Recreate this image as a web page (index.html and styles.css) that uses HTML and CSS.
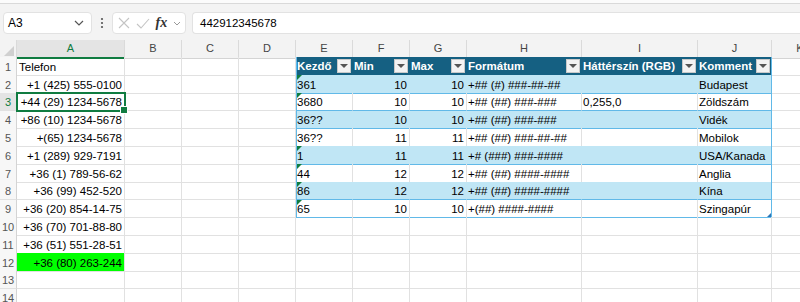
FILE: index.html
```html
<!doctype html>
<html>
<head>
<meta charset="utf-8" />
<meta name="viewport" content="width=device-width" />
<title>Telefonszámok</title>
<link rel="stylesheet" href="styles.css">
</head>
<body>

<div class="ribbon-edge"></div>

<div class="fbar">
  <div class="namebox">
    <span>A3</span>
    <svg width="10" height="6" viewBox="0 0 10 6"><path d="M1 1l4 4 4-4" fill="none" stroke="#555" stroke-width="1.2"/></svg>
  </div>
  <div class="dots">
    <svg width="4" height="12" viewBox="0 0 4 12"><circle cx="2" cy="2" r="1.1" fill="#555"/><circle cx="2" cy="6" r="1.1" fill="#555"/><circle cx="2" cy="10" r="1.1" fill="#555"/></svg>
  </div>
  <div class="fbtns">
    <svg width="12" height="12" viewBox="0 0 12 12"><path d="M1 1l10 10M11 1L1 11" stroke="#c4c4c4" stroke-width="1.1"/></svg>
    <svg width="14" height="11" viewBox="0 0 14 11"><path d="M1 6l4 4 8-9" fill="none" stroke="#c4c4c4" stroke-width="1.1"/></svg>
    <span class="fx">fx</span>
    <svg width="8" height="5" viewBox="0 0 8 5"><path d="M1 1l3 3 3-3" fill="none" stroke="#999" stroke-width="1"/></svg>
  </div>
  <div class="finput">442912345678</div>
</div>

<div class="sheet">
  <div class="row colhdr">
    <div class="corner"></div>
    <div class="on">A</div><div>B</div><div>C</div><div>D</div><div>E</div><div>F</div>
    <div>G</div><div>H</div><div>I</div><div>J</div><div>K</div>
  </div>

  <div class="row">
    <div class="rh">1</div>
    <div>Telefon</div><div></div><div></div><div></div>
    <div class="h first">Kezdő<i class="fb"></i></div>
    <div class="h">Min<i class="fb"></i></div>
    <div class="h">Max<i class="fb"></i></div>
    <div class="h">Formátum<i class="fb"></i></div>
    <div class="h">Háttérszín (RGB)<i class="fb"></i></div>
    <div class="h last">Komment<i class="fb"></i></div>
    <div></div>
  </div>

  <div class="row band">
    <div class="rh">2</div>
    <div class="r">+1 (425) 555-0100</div><div></div><div></div><div></div>
    <div class="t first err">361</div>
    <div class="t r">10</div>
    <div class="t r">10</div>
    <div class="t">+## (#) ###-##-##</div>
    <div class="t"></div>
    <div class="t last">Budapest</div>
    <div></div>
  </div>

  <div class="row">
    <div class="rh on">3</div>
    <div class="r sel">+44 (29) 1234-5678</div><div></div><div></div><div></div>
    <div class="t first err">3680</div>
    <div class="t r">10</div>
    <div class="t r">10</div>
    <div class="t">+## (##) ###-###</div>
    <div class="t">0,255,0</div>
    <div class="t last">Zöldszám</div>
    <div></div>
  </div>

  <div class="row band">
    <div class="rh">4</div>
    <div class="r">+86 (10) 1234-5678</div><div></div><div></div><div></div>
    <div class="t first">36??</div>
    <div class="t r">10</div>
    <div class="t r">10</div>
    <div class="t">+## (##) ###-###</div>
    <div class="t"></div>
    <div class="t last">Vidék</div>
    <div></div>
  </div>

  <div class="row">
    <div class="rh">5</div>
    <div class="r">+(65) 1234-5678</div><div></div><div></div><div></div>
    <div class="t first">36??</div>
    <div class="t r">11</div>
    <div class="t r">11</div>
    <div class="t">+## (##) ###-##-##</div>
    <div class="t"></div>
    <div class="t last">Mobilok</div>
    <div></div>
  </div>

  <div class="row band">
    <div class="rh">6</div>
    <div class="r">+1 (289) 929-7191</div><div></div><div></div><div></div>
    <div class="t first err">1</div>
    <div class="t r">11</div>
    <div class="t r">11</div>
    <div class="t">+# (###) ###-####</div>
    <div class="t"></div>
    <div class="t last">USA/Kanada</div>
    <div></div>
  </div>

  <div class="row">
    <div class="rh">7</div>
    <div class="r">+36 (1) 789-56-62</div><div></div><div></div><div></div>
    <div class="t first err">44</div>
    <div class="t r">12</div>
    <div class="t r">12</div>
    <div class="t">+## (##) ####-####</div>
    <div class="t"></div>
    <div class="t last">Anglia</div>
    <div></div>
  </div>

  <div class="row band">
    <div class="rh">8</div>
    <div class="r">+36 (99) 452-520</div><div></div><div></div><div></div>
    <div class="t first err">86</div>
    <div class="t r">12</div>
    <div class="t r">12</div>
    <div class="t">+## (##) ####-####</div>
    <div class="t"></div>
    <div class="t last">Kína</div>
    <div></div>
  </div>

  <div class="row">
    <div class="rh">9</div>
    <div class="r">+36 (20) 854-14-75</div><div></div><div></div><div></div>
    <div class="t first err">65</div>
    <div class="t r">10</div>
    <div class="t r">10</div>
    <div class="t">+(##) ####-####</div>
    <div class="t"></div>
    <div class="t last grip">Szingapúr</div>
    <div></div>
  </div>

  <div class="row">
    <div class="rh">10</div>
    <div class="r">+36 (70) 701-88-80</div><div></div><div></div><div></div>
    <div></div><div></div><div></div><div></div><div></div><div></div><div></div>
  </div>

  <div class="row">
    <div class="rh">11</div>
    <div class="r">+36 (51) 551-28-51</div><div></div><div></div><div></div>
    <div></div><div></div><div></div><div></div><div></div><div></div><div></div>
  </div>

  <div class="row">
    <div class="rh">12</div>
    <div class="r lime">+36 (80) 263-244</div><div></div><div></div><div></div>
    <div></div><div></div><div></div><div></div><div></div><div></div><div></div>
  </div>

  <div class="row">
    <div class="rh">13</div>
    <div></div><div></div><div></div><div></div>
    <div></div><div></div><div></div><div></div><div></div><div></div><div></div>
  </div>

  <div class="row">
    <div class="rh">14</div>
    <div></div><div></div><div></div><div></div>
    <div></div><div></div><div></div><div></div><div></div><div></div><div></div>
  </div>
</div>

</body>
</html>
```

FILE: styles.css
```css
* { box-sizing: border-box; }

body {
  margin: 0;
  height: 302px;
  overflow: hidden;
  background: #fff;
  color: #000;
  font-family: "Liberation Sans", Arial, sans-serif;
  font-size: 11.5px;
}

/* ----- formula bar ----- */

.ribbon-edge {
  height: 4px;
  background: #fbfbfb;
  border-bottom: 1px solid #d9d9d9;
}

.fbar {
  display: flex;
  height: 36px;
  padding: 8px 0 6px 3px;
  background: #f3f3f3;
}

.namebox, .fbtns, .finput {
  height: 22px;
  background: #fff;
  border: 1px solid #e2e2e2;
  border-radius: 4px;
  display: flex;
  align-items: center;
}

.namebox {
  width: 89px;
  justify-content: space-between;
  padding: 0 7px 0 4px;
  font-size: 12px;
}

.dots {
  width: 20px;
  display: flex;
  align-items: center;
  justify-content: center;
}

.fbtns {
  width: 74px;
  padding: 0 4px 0 5px;
  justify-content: space-between;
}

.fx {
  font-family: "Liberation Serif", serif;
  font-style: italic;
  font-weight: bold;
  font-size: 14px;
  color: #333;
}

.finput {
  flex: 1;
  margin-left: 6px;
  padding-left: 7px;
  border-right: none;
  border-radius: 4px 0 0 4px;
  font-size: 11.5px;
}

/* ----- grid ----- */

.row {
  display: grid;
  grid-template-columns: 17px 108px 57px 57px 57px 57px 57px 57px 115px 116px 74px 57px;
  height: 17.8px;
}

.row > div {
  position: relative;
  white-space: nowrap;
  line-height: 16px;
  padding: 1.5px 2px 0 2px;
  border-right: 1px solid #e1e1e1;
  border-bottom: 1px solid #e1e1e1;
}

.row > .r { text-align: right; }

.colhdr { height: 17.3px; }

.colhdr > div {
  background: #f3f3f3;
  color: #444;
  font-size: 11px;
  text-align: center;
  padding: 0;
  line-height: 17px;
  border-right-color: #dadada;
  border-bottom-color: #d4d4d4;
}

.colhdr > .on {
  background: #e4e4e4;
  color: #107c41;
  border-bottom: 2px solid #107c41;
}

.colhdr > .corner {
  background: #f3f3f3;
}

.corner::after {
  content: '';
  position: absolute;
  right: 2px;
  bottom: 2px;
  border-left: 10px solid transparent;
  border-bottom: 10px solid #d0d0d0;
}

.row > .rh {
  background: #f7f7f7;
  color: #555;
  text-align: center;
  padding: 1.5px 0 0;
  font-size: 11px;
  border-right-color: #d4d4d4;
}

.row > .rh.on {
  background: #e4e4e4;
  color: #107c41;
}

/* ----- selection ----- */

.sel {
  outline: 2px solid #107c41;
  outline-offset: -1px;
  z-index: 2;
}

.sel::after {
  content: '';
  position: absolute;
  right: -4px;
  bottom: -4px;
  width: 6px;
  height: 6px;
  background: #107c41;
  border: 1px solid #fff;
}

.row > .lime { background: #00ff00; }

/* ----- table ----- */

.row > .h {
  background: #156082;
  color: #fff;
  font-weight: bold;
  display: flex;
  align-items: center;
  justify-content: space-between;
  padding: 0 1px 0 1px;
  border-right-color: #156082;
  border-bottom-color: #61b9e8;
}

.fb {
  width: 14px;
  height: 14px;
  background: #f3f3f3;
  border: 1px solid #c9c9c9;
  display: flex;
  align-items: center;
  justify-content: center;
}

.fb::after {
  content: '';
  border-left: 4px solid transparent;
  border-right: 4px solid transparent;
  border-top: 4px solid #555;
}

.row > .t {
  padding-left: 1px;
  border-bottom-color: #61b9e8;
}

.band > .t {
  background: #c0e6f5;
  border-right-color: #c0e6f5;
}

.row > .first { box-shadow: inset 1px 0 0 #61b9e8; }
.row > .last { border-right-color: #61b9e8; }

.err::before {
  content: '';
  position: absolute;
  left: 1px;
  top: 0;
  border-top: 5px solid #107c41;
  border-right: 5px solid transparent;
}

.grip::after {
  content: '';
  position: absolute;
  right: 0;
  bottom: 0;
  border-left: 4px solid transparent;
  border-bottom: 4px solid #2e75b6;
}
```
